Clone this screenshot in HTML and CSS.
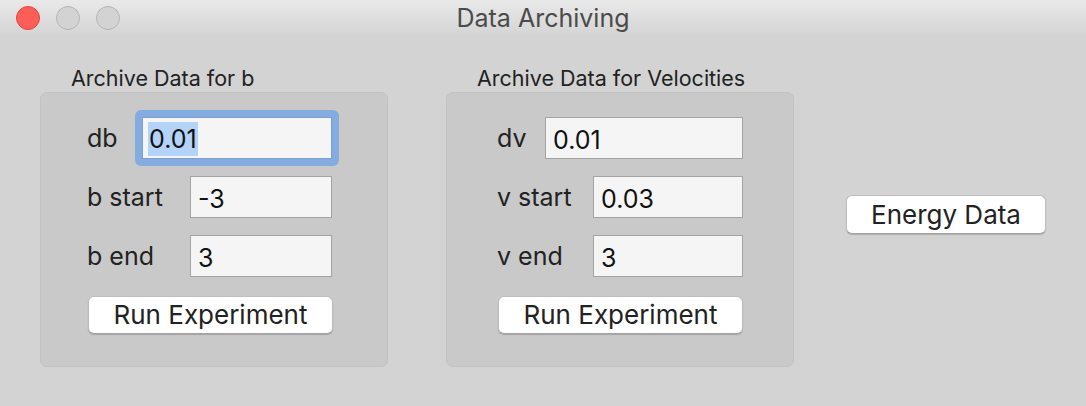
FILE: index.html
```html
<!DOCTYPE html>
<html lang="en">
<head>
<meta charset="utf-8">
<title>Data Archiving</title>
<link rel="stylesheet" href="styles.css">
</head>
<body>
<div class="window">
  <header class="titlebar">
    <div class="lights">
      <span class="light light-close"></span>
      <span class="light light-min"></span>
      <span class="light light-max"></span>
    </div>
    <div class="title">Data Archiving</div>
    <div class="spacer"></div>
  </header>
  <main class="content">
    <section class="group group-b">
      <div class="group-title">Archive Data for b</div>
      <div class="group-box">
        <div class="row">
          <span class="label">db</span>
          <span class="focus-ring"><span class="field field-w1"><span class="selected">0.01</span></span></span>
        </div>
        <div class="row">
          <span class="label">b start</span>
          <span class="field field-n1">-3</span>
        </div>
        <div class="row">
          <span class="label">b end</span>
          <span class="field field-n1">3</span>
        </div>
        <button class="btn btn-run">Run Experiment</button>
      </div>
    </section>
    <section class="group group-v">
      <div class="group-title">Archive Data for Velocities</div>
      <div class="group-box">
        <div class="row">
          <span class="label">dv</span>
          <span class="field field-w2">0.01</span>
        </div>
        <div class="row">
          <span class="label">v start</span>
          <span class="field field-n2">0.03</span>
        </div>
        <div class="row">
          <span class="label">v end</span>
          <span class="field field-n2">3</span>
        </div>
        <button class="btn btn-run">Run Experiment</button>
      </div>
    </section>
    <div class="side">
      <button class="btn btn-energy">Energy Data</button>
    </div>
  </main>
</div>
</body>
</html>
```

FILE: styles.css
```css
* { box-sizing: border-box; }
html, body {
  margin: 0;
  padding: 0;
  width: 1086px;
  height: 406px;
  overflow: hidden;
  background: #d3d3d3;
}
body {
  font-family: Inter, "Liberation Sans", sans-serif;
  color: #222;
}
.window {
  width: 1086px;
  height: 406px;
  background: #d3d3d3;
}
.titlebar {
  height: 36px;
  display: grid;
  grid-template-columns: 1fr auto 1fr;
  align-items: center;
  background: linear-gradient(#e9e9e9, #d4d4d4);
}
.lights {
  display: flex;
  gap: 16px;
  padding-left: 16px;
  align-items: center;
  margin-top: -1px;
}
.light {
  width: 24px;
  height: 24px;
  border-radius: 50%;
  background: #d3d3d3;
  border: 1px solid #b4b4b4;
}
.light-close {
  background: #fd5f58;
  border-color: #de453f;
}
.title {
  font-size: 25px;
  color: #4b4b4b;
  line-height: 36px;
}
.content {
  display: flex;
  align-items: flex-start;
  padding: 29px 0 0 40px;
}
.group {
  width: 348px;
}
.group-v {
  margin-left: 58px;
}
.group-title {
  font-size: 21.5px;
  line-height: 26px;
  padding-left: 31px;
  margin-bottom: 1px;
  color: #222;
}
.group-box {
  height: 275px;
  background: #c9c9c9;
  border: 1px solid #c2c2c2;
  border-radius: 7px;
  padding: 24px 55px 0 46px;
  display: flex;
  flex-direction: column;
}
.group-v .group-box {
  padding-left: 50px;
  padding-right: 50px;
}
.row {
  display: flex;
  align-items: center;
  justify-content: space-between;
  height: 42px;
  margin-bottom: 17px;
}
.label {
  font-size: 25px;
  color: #222;
}
.field {
  display: flex;
  align-items: center;
  height: 42px;
  background: #f5f5f5;
  border: 1px solid #a3a3a3;
  padding: 3px 0 0 7px;
  font-size: 25px;
  color: #111;
}
.field-w1 { width: 190px; }
.field-n1 { width: 142px; }
.field-w2 { width: 198px; }
.field-n2 { width: 150px; }
.focus-ring {
  display: flex;
  padding: 7px;
  margin: -7px;
  background: #84ace0;
  border-radius: 6px;
}
.focus-ring .field {
  border-color: #7c9fcf;
  padding-left: 5px;
  padding-top: 2px;
}
.selected {
  background: #b3d3f9;
  padding: 0 1px;
  line-height: 34px;
}
.btn {
  font-family: inherit;
  font-size: 26px;
  color: #222;
  background: #ffffff;
  border: 1px solid #bdbdbd;
  border-bottom-color: #a2a2a2;
  border-radius: 6px;
  box-shadow: 0 1px 1px rgba(0, 0, 0, 0.18);
  padding: 0;
  line-height: 1;
  display: flex;
  align-items: center;
  justify-content: center;
}
.btn-run {
  width: 245px;
  height: 38px;
  margin-top: 2px;
  margin-left: 1px;
}
.side {
  margin-left: 52px;
  margin-top: 130px;
}
.btn-energy {
  width: 200px;
  height: 39px;
}
```
